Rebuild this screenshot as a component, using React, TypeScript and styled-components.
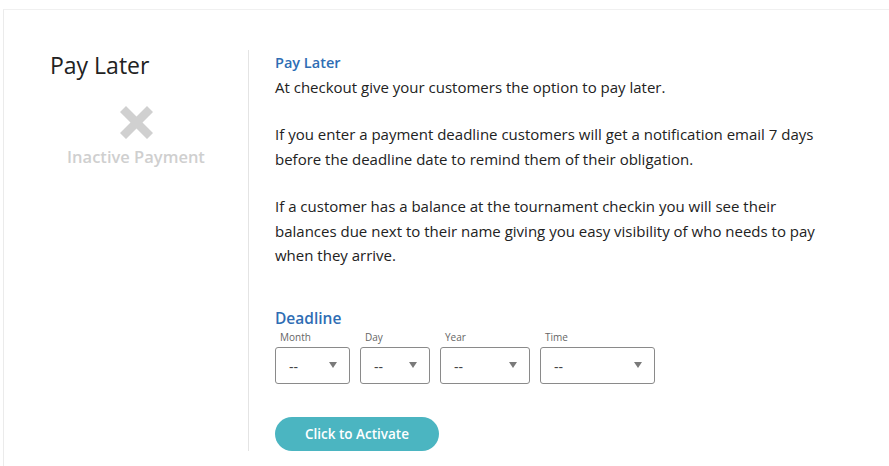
import styled, { createGlobalStyle } from 'styled-components';

const GlobalStyle = createGlobalStyle`
  html, body {
    margin: 0;
    padding: 0;
    background: #ffffff;
    font-family: 'Open Sans', 'Noto Sans', sans-serif;
    overflow: hidden;
  }
`;

const Page = styled.div`
  padding: 9px 0 0 3px;
`;

const Card = styled.div`
  display: flex;
  width: 900px;
  min-height: 480px;
  border-top: 1px solid #f0f0f0;
  border-left: 1px solid #ebebeb;
  padding: 40px 0 0 0;
  box-sizing: border-box;
`;

const Sidebar = styled.div`
  width: 245px;
  height: 401px;
  padding-left: 20px;
  border-right: 1px solid #e4e4e4;
  display: flex;
  flex-direction: column;
  align-items: center;
  box-sizing: border-box;
`;

const SideTitle = styled.h2`
  align-self: flex-start;
  margin: 0 0 0 26px;
  font-size: 23px;
  font-weight: 400;
  color: #222;
  line-height: 30px;
`;

const XIcon = styled.svg`
  margin-top: 26px;
  width: 33px;
  height: 33px;
`;

const Status = styled.div`
  margin-top: 6px;
  font-size: 16.5px;
  font-weight: 600;
  color: #cfcfcf;
`;

const Content = styled.div`
  padding-left: 26px;
  width: 555px;
  color: #222;
`;

const Heading = styled.h3`
  margin: 1px 0 0;
  font-size: 14.5px;
  font-weight: 600;
  color: #2e6db4;
  line-height: 24px;
`;

const Paragraph = styled.p`
  margin: 0 0 23px;
  font-size: 15px;
  line-height: 24.4px;
`;

const Deadline = styled(Heading)`
  margin-top: 39px;
  font-size: 15.5px;
`;

const Fields = styled.div`
  display: flex;
  gap: 10px;
`;

const Field = styled.div<{ $w: number }>`
  width: ${({ $w }) => $w}px;
  display: flex;
  flex-direction: column;
`;

const FieldLabel = styled.span`
  font-size: 10px;
  color: #666;
  padding-left: 5px;
  line-height: 14px;
`;

const Select = styled.div`
  margin-top: 3px;
  height: 37px;
  border: 1px solid #8a8a8a;
  border-radius: 3px;
  display: flex;
  align-items: center;
  justify-content: space-between;
  padding: 2px 12px 0 13px;
  box-sizing: border-box;
  font-size: 14px;
  color: #444;
`;

const Caret = styled.span`
  width: 0;
  height: 0;
  border-left: 4.5px solid transparent;
  border-right: 4.5px solid transparent;
  border-top: 6px solid #7a7a7a;
  margin-top: -3px;
`;

const ActivateButton = styled.button`
  margin-top: 33px;
  width: 164px;
  height: 34px;
  border: none;
  border-radius: 17px;
  background: #4bb5c1;
  color: #fff;
  font-family: inherit;
  font-size: 13.5px;
  font-weight: 600;
  cursor: pointer;
`;

const fields = [
  { label: 'Month', w: 75 },
  { label: 'Day', w: 70 },
  { label: 'Year', w: 90 },
  { label: 'Time', w: 115 },
];

export default function App() {
  return (
    <>
      <GlobalStyle />
      <Page>
        <Card>
          <Sidebar>
            <SideTitle>Pay Later</SideTitle>
            <XIcon viewBox="0 0 33 33">
              <path d="M0 6 L6 0 L16.5 10.5 L27 0 L33 6 L22.5 16.5 L33 27 L27 33 L16.5 22.5 L6 33 L0 27 L10.5 16.5 Z" fill="#d0d0d0" />
            </XIcon>
            <Status>Inactive Payment</Status>
          </Sidebar>
          <Content>
            <Heading>Pay Later</Heading>
            <Paragraph>At checkout give your customers the option to pay later.</Paragraph>
            <Paragraph>
              If you enter a payment deadline customers will get a notification email 7 days before the deadline date
              to remind them of their obligation.
            </Paragraph>
            <Paragraph>
              If a customer has a balance at the tournament checkin you will see their balances due next to their
              name giving you easy visibility of who needs to pay when they arrive.
            </Paragraph>
            <Deadline>Deadline</Deadline>
            <Fields>
              {fields.map((f) => (
                <Field key={f.label} $w={f.w}>
                  <FieldLabel>{f.label}</FieldLabel>
                  <Select>
                    <span>--</span>
                    <Caret />
                  </Select>
                </Field>
              ))}
            </Fields>
            <ActivateButton>Click to Activate</ActivateButton>
          </Content>
        </Card>
      </Page>
    </>
  );
}
